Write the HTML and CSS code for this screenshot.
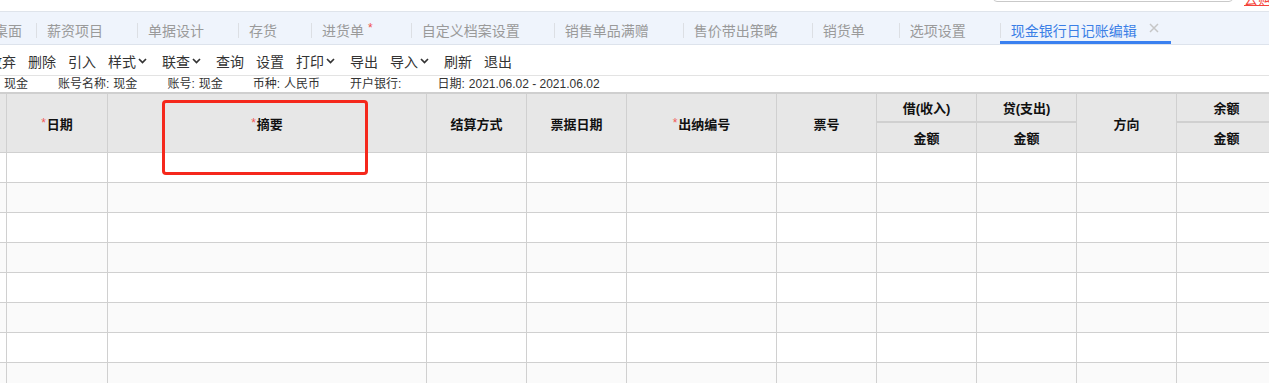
FILE: index.html
```html
<!DOCTYPE html>
<html lang="zh-CN">
<head>
  <meta charset="UTF-8" />
  <meta name="viewport" content="width=device-width, initial-scale=1.0" />
  <title>现金银行日记账编辑</title>
  <link rel="stylesheet" href="styles.css">
</head>
<body>
  <div class="topbar">
    <div class="search"></div>
    <a class="buy">去购买</a>
  </div>

  <div class="tabs">
    <div class="tab home">桌面</div>
    <div class="tab">薪资项目</div>
    <div class="tab">单据设计</div>
    <div class="tab">存货</div>
    <div class="tab">进货单 <span class="star">*</span></div>
    <div class="tab">自定义档案设置</div>
    <div class="tab">销售单品满赠</div>
    <div class="tab">售价带出策略</div>
    <div class="tab">销货单</div>
    <div class="tab">选项设置</div>
    <div class="tab active">现金银行日记账编辑
      <svg class="close" width="10" height="10" viewBox="0 0 10 10"><path d="M1 1L9 9M9 1L1 9" /></svg>
    </div>
  </div>

  <div class="toolbar">
    <span>放弃</span>
    <span>删除</span>
    <span>引入</span>
    <span class="drop">样式<svg class="caret" width="9" height="6" viewBox="0 0 9 6"><polyline points="1,1 4.5,4.5 8,1" /></svg></span>
    <span class="drop">联查<svg class="caret" width="9" height="6" viewBox="0 0 9 6"><polyline points="1,1 4.5,4.5 8,1" /></svg></span>
    <span>查询</span>
    <span>设置</span>
    <span class="drop">打印<svg class="caret" width="9" height="6" viewBox="0 0 9 6"><polyline points="1,1 4.5,4.5 8,1" /></svg></span>
    <span>导出</span>
    <span class="drop">导入<svg class="caret" width="9" height="6" viewBox="0 0 9 6"><polyline points="1,1 4.5,4.5 8,1" /></svg></span>
    <span>刷新</span>
    <span>退出</span>
  </div>

  <div class="info">
    <span>现金</span>
    <span>账号名称:<b>现金</b></span>
    <span>账号:<b>现金</b></span>
    <span>币种:<b>人民币</b></span>
    <span class="bank">开户银行:<b></b></span>
    <span>日期:<b>2021.06.02 - 2021.06.02</b></span>
  </div>

  <div class="grid">
    <table>
      <colgroup>
        <col style="width:101px"><col style="width:101px"><col style="width:319px">
        <col style="width:100px"><col style="width:100px"><col style="width:150px">
        <col style="width:100px"><col style="width:100px"><col style="width:100px">
        <col style="width:100px"><col style="width:100px">
      </colgroup>
      <thead>
        <tr>
          <th rowspan="2"></th>
          <th rowspan="2"><i>*</i>日期</th>
          <th rowspan="2"><i>*</i>摘要</th>
          <th rowspan="2">结算方式</th>
          <th rowspan="2">票据日期</th>
          <th rowspan="2"><i>*</i>出纳编号</th>
          <th rowspan="2">票号</th>
          <th class="group">借(收入)</th>
          <th class="group">贷(支出)</th>
          <th rowspan="2">方向</th>
          <th class="group">余额</th>
        </tr>
        <tr>
          <th class="sub">金额</th>
          <th class="sub">金额</th>
          <th class="sub">金额</th>
        </tr>
      </thead>
      <tbody>
        <tr><td></td><td></td><td></td><td></td><td></td><td></td><td></td><td></td><td></td><td></td><td></td></tr>
        <tr><td></td><td></td><td></td><td></td><td></td><td></td><td></td><td></td><td></td><td></td><td></td></tr>
        <tr><td></td><td></td><td></td><td></td><td></td><td></td><td></td><td></td><td></td><td></td><td></td></tr>
        <tr><td></td><td></td><td></td><td></td><td></td><td></td><td></td><td></td><td></td><td></td><td></td></tr>
        <tr><td></td><td></td><td></td><td></td><td></td><td></td><td></td><td></td><td></td><td></td><td></td></tr>
        <tr><td></td><td></td><td></td><td></td><td></td><td></td><td></td><td></td><td></td><td></td><td></td></tr>
        <tr><td></td><td></td><td></td><td></td><td></td><td></td><td></td><td></td><td></td><td></td><td></td></tr>
        <tr><td></td><td></td><td></td><td></td><td></td><td></td><td></td><td></td><td></td><td></td><td></td></tr>
      </tbody>
    </table>
    <div class="mark"></div>
  </div>
</body>
</html>
```

FILE: styles.css
```css
* {
  margin: 0;
  padding: 0;
  box-sizing: border-box;
}

body {
  width: 100%;
  height: 100vh;
  overflow: hidden;
  background: #fff;
  color: #333;
  font-family: "Liberation Sans", "Noto Sans CJK SC", sans-serif;
}

/* top strip, mostly scrolled out */
.topbar {
  display: flex;
  align-items: flex-end;
  height: 12px;
  padding: 0 0 9px 993px;
  overflow: hidden;
  border-bottom: 1px solid #dfe4eb;
}

.search {
  flex-shrink: 0;
  width: 240px;
  height: 30px;
  border: 1px solid #c9c9c9;
  border-radius: 4px;
}

.buy {
  flex-shrink: 0;
  margin: 0 0 -4px 11px;
  color: #f4433a;
  font-size: 14px;
  line-height: 14px;
  text-decoration: underline;
}

/* tabs */
.tabs {
  display: flex;
  height: 33px;
  margin-left: -17px;
  background: #eff4fc;
  border-bottom: 1px solid #dde3ec;
  white-space: nowrap;
}

.tab {
  display: flex;
  align-items: center;
  height: 32px;
  padding: 3px 34px 0 11px;
  color: #9a9a9a;
  font-size: 14px;
}

.tab + .tab {
  background: linear-gradient(#dcdfe4, #dcdfe4) no-repeat left 0 top 11px / 1px 15px;
}

.tab.home {
  padding-right: 14px;
}

.tab .star {
  color: #f0504a;
  margin: -4px 4px 0 4px;
  font-size: 12px;
}

.tab.active {
  padding-right: 12px;
  color: #3b7fe6;
  box-shadow: inset 0 -3px 0 #3a80f0;
}

.close {
  margin: -3px 0 0 12px;
  stroke: #c6c6c6;
  stroke-width: 1.5;
}

/* toolbar */
.toolbar {
  display: flex;
  align-items: center;
  gap: 12px;
  height: 31px;
  margin-left: -12px;
  padding-top: 2px;
  border-bottom: 1px solid #e3e3e3;
  font-size: 14px;
  color: #333;
  white-space: nowrap;
}

.drop {
  display: flex;
  align-items: center;
}

.caret {
  margin: -1px 3px 0 2px;
  fill: none;
  stroke: #333;
  stroke-width: 1.7;
}

/* account info line */
.info {
  display: flex;
  gap: 30px;
  height: 16px;
  padding-left: 4px;
  font-size: 12px;
  line-height: 16px;
  color: #333;
  white-space: nowrap;
}

.info b {
  font-weight: normal;
  margin-left: 4px;
}

.info .bank b {
  margin-left: 6px;
}

/* ledger table */
.grid {
  position: relative;
  overflow: hidden;
  border-top: 2px solid #cfcfcf;
}

table {
  table-layout: fixed;
  width: 1371px;
  margin-left: -94px;
  border-collapse: separate;
  border-spacing: 0;
}

th, td {
  border-right: 1px solid #d0d0d0;
  border-bottom: 1px solid #d0d0d0;
  padding: 0;
}

th {
  height: 29px;
  background: #e7e7e7;
  color: #111;
  font-size: 13px;
  font-weight: bold;
  text-align: center;
  white-space: nowrap;
}

th.group {
  height: 29px;
  border-bottom: 2px solid #d0d0d0;
}

th.sub {
  height: 30px;
}

th i {
  font-style: normal;
  font-weight: normal;
  font-size: 12px;
  color: #f25a5a;
  margin-right: 1px;
  vertical-align: 2px;
}

td {
  height: 30px;
  background: #fff;
}

tbody tr:nth-child(even) td {
  background: #fafafa;
}

/* red annotation box */
.mark {
  position: absolute;
  left: 162px;
  top: 6px;
  width: 206px;
  height: 75px;
  border: 3px solid #f5281c;
  border-radius: 4px;
}
```
